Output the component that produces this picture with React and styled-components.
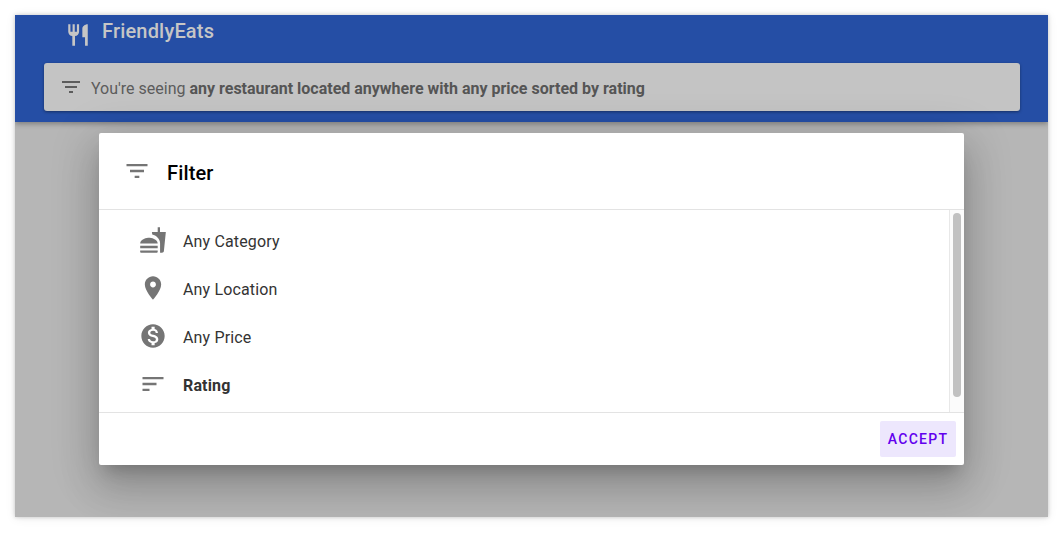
import React from "react";
import styled, { createGlobalStyle } from "styled-components";

const Global = createGlobalStyle`
  html, body { margin: 0; padding: 0; background: #fff; }
  body { font-family: Roboto, "Liberation Sans", sans-serif; }
`;

const Page = styled.div`
  width: 1063px;
  height: 533px;
  padding: 15px;
  box-sizing: border-box;
  overflow: hidden;
`;

const Frame = styled.div`
  position: relative;
  width: 1033px;
  height: 502px;
  background: #b6b6b6;
  box-shadow: 0 0 4px rgba(0, 0, 0, 0.2), 0 1px 10px rgba(0, 0, 0, 0.08);
  overflow: hidden;
`;

const Header = styled.header`
  height: 107px;
  box-sizing: border-box;
  background: #254ea5;
  box-shadow: 0 2px 5px rgba(0, 0, 0, 0.3);
  padding: 6px 28px 0 29px;
  display: flex;
  flex-direction: column;
`;

const Brand = styled.div`
  display: flex;
  align-items: center;
  height: 20px;
  padding-left: 21px;
  gap: 11px;
  color: #c6c6c6;
  font-size: 20px;
  font-weight: 500;
  letter-spacing: 0.18px;
`;

const BrandIcon = styled.svg`
  width: 26px;
  height: 26px;
  margin-top: 7px;
  fill: #c6c6c6;
  flex: none;
`;

const Summary = styled.div`
  height: 48px;
  margin-top: 22px;
  background: #c4c4c4;
  border-radius: 3px;
  box-shadow: 0 1px 3px rgba(0, 0, 0, 0.4);
  display: flex;
  align-items: center;
  padding-left: 15px;
  gap: 8px;
  color: #5c5c5c;
  font-size: 16px;
`;

const SummaryText = styled.span`
  margin-top: 2px;
`;

const Strong = styled.strong`
  font-weight: 700;
  color: #555;
`;

const SummaryIcon = styled.svg`
  width: 24px;
  height: 24px;
  fill: #5c5c5c;
  flex: none;
`;

const DialogLayer = styled.div`
  position: absolute;
  inset: 0;
  display: flex;
  justify-content: center;
  align-items: flex-start;
  padding-top: 118px;
`;

const Dialog = styled.section`
  width: 865px;
  height: 332px;
  background: #fff;
  border-radius: 2px;
  display: flex;
  flex-direction: column;
  box-shadow: 0 11px 15px -7px rgba(0, 0, 0, 0.2), 0 24px 38px 3px rgba(0, 0, 0, 0.14),
    0 9px 46px 8px rgba(0, 0, 0, 0.12);
`;

const Title = styled.div`
  height: 77px;
  box-sizing: border-box;
  flex: none;
  display: flex;
  align-items: center;
  padding-left: 24px;
  gap: 16px;
  font-size: 20px;
  font-weight: 500;
  letter-spacing: 0.15px;
  color: #000;
  border-bottom: 1px solid #e3e3e3;
`;

const TitleText = styled.span`
  margin-top: 4px;
`;

const TitleIcon = styled.svg`
  width: 28px;
  height: 28px;
  fill: #757575;
  flex: none;
`;

const Body = styled.div`
  flex: 1;
  min-height: 0;
  display: flex;
`;

const List = styled.ul`
  flex: 1;
  list-style: none;
  margin: 0;
  padding: 7px 0 0 40px;
`;

const Row = styled.li`
  height: 48px;
  display: flex;
  align-items: center;
  gap: 16px;
  font-size: 16px;
  letter-spacing: 0.15px;
  color: #333;
  font-weight: ${(p) => (p.$active ? 700 : 400)};
`;

const RowIcon = styled.svg`
  width: 28px;
  height: 28px;
  margin-top: -2px;
  fill: #757575;
  flex: none;
`;

const Track = styled.div`
  width: 8px;
  flex: none;
  background: #fbfbfb;
  border-left: 1px solid #e8e8e8;
  padding: 3px 3px 0 3px;
`;

const Thumb = styled.div`
  width: 8px;
  height: 184px;
  border-radius: 4px;
  background: #c1c1c1;
`;

const Footer = styled.div`
  height: 53px;
  flex: none;
  box-sizing: border-box;
  border-top: 1px solid #e3e3e3;
  display: flex;
  justify-content: flex-end;
  align-items: center;
  padding-right: 8px;
`;

const Accept = styled.button`
  width: 76px;
  height: 36px;
  border: 0;
  border-radius: 2px;
  padding: 0;
  background: #ede7fd;
  color: #6200ee;
  font-family: inherit;
  font-size: 14px;
  font-weight: 500;
  letter-spacing: 1.25px;
`;

const Icon = ({ as: C, d }) => (
  <C viewBox="0 0 24 24" aria-hidden="true">
    <path d={d} />
  </C>
);

const FILTER = "M10 18h4v-2h-4v2zM3 6v2h18V6H3zm3 7h12v-2H6v2z";
const REST = "M11 9H9V2H7v7H5V2H3v7c0 2.12 1.66 3.84 3.75 3.97V22h2.5v-9.03C11.34 12.84 13 11.12 13 9V2h-2v7zm5-3v8h2.5v8H21V2c-2.76 0-5 2.24-5 4z";
const FOOD = "M18.06 22.99h1.66c.84 0 1.53-.64 1.63-1.46L23 5.05h-5V1h-1.97v4.05h-4.97l.3 2.34c1.71.47 3.31 1.32 4.27 2.26 1.44 1.42 2.43 2.89 2.43 5.29v8.05zM1 21.99V21h15.03v.99c0 .55-.45 1-1.01 1H2.01c-.56 0-1.01-.45-1.01-1zm15.03-7c.11-4.01-5.97-5-7.5-5-1.53 0-7.62.99-7.51 5h15.01zM1.02 17h15v2h-15z";
const PIN = "M12 2C8.13 2 5 5.13 5 9c0 5.25 7 13 7 13s7-7.75 7-13c0-3.87-3.13-7-7-7zm0 9.5c-1.38 0-2.5-1.12-2.5-2.5s1.12-2.5 2.5-2.5 2.5 1.12 2.5 2.5-1.12 2.5-2.5 2.5z";
const MONEY = "M12 2C6.48 2 2 6.48 2 12s4.48 10 10 10 10-4.48 10-10S17.52 2 12 2zm1.41 16.09V20h-2.67v-1.93c-1.71-.36-3.16-1.46-3.27-3.4h1.96c.1 1.05.82 1.87 2.65 1.87 1.96 0 2.4-.98 2.4-1.59 0-.83-.44-1.61-2.67-2.14-2.48-.6-4.18-1.62-4.18-3.67 0-1.72 1.39-2.84 3.11-3.21V4h2.67v1.95c1.86.45 2.79 1.86 2.85 3.39H14.3c-.05-1.11-.64-1.87-2.22-1.87-1.5 0-2.4.68-2.4 1.64 0 .84.65 1.39 2.67 1.91s4.18 1.39 4.18 3.91c-.01 1.83-1.38 2.83-3.12 3.16z";
const SORT = "M3 18h6v-2H3v2zM3 6v2h18V6H3zm0 7h12v-2H3v2z";

const rows = [
  { d: FOOD, label: "Any Category" },
  { d: PIN, label: "Any Location" },
  { d: MONEY, label: "Any Price" },
  { d: SORT, label: "Rating", active: true },
];

export default function App() {
  return (
    <>
      <Global />
      <Page>
        <Frame>
          <Header>
            <Brand>
              <Icon as={BrandIcon} d={REST} />
              <span>FriendlyEats</span>
            </Brand>
            <Summary>
              <Icon as={SummaryIcon} d={FILTER} />
              <SummaryText>
                You're seeing <Strong>any restaurant located anywhere with any price sorted by rating</Strong>
              </SummaryText>
            </Summary>
          </Header>
          <DialogLayer>
            <Dialog>
              <Title>
                <Icon as={TitleIcon} d={FILTER} />
                <TitleText>Filter</TitleText>
              </Title>
              <Body>
                <List>
                  {rows.map((r) => (
                    <Row key={r.label} $active={r.active}>
                      <Icon as={RowIcon} d={r.d} />
                      <span>{r.label}</span>
                    </Row>
                  ))}
                </List>
                <Track>
                  <Thumb />
                </Track>
              </Body>
              <Footer>
                <Accept>ACCEPT</Accept>
              </Footer>
            </Dialog>
          </DialogLayer>
        </Frame>
      </Page>
    </>
  );
}
